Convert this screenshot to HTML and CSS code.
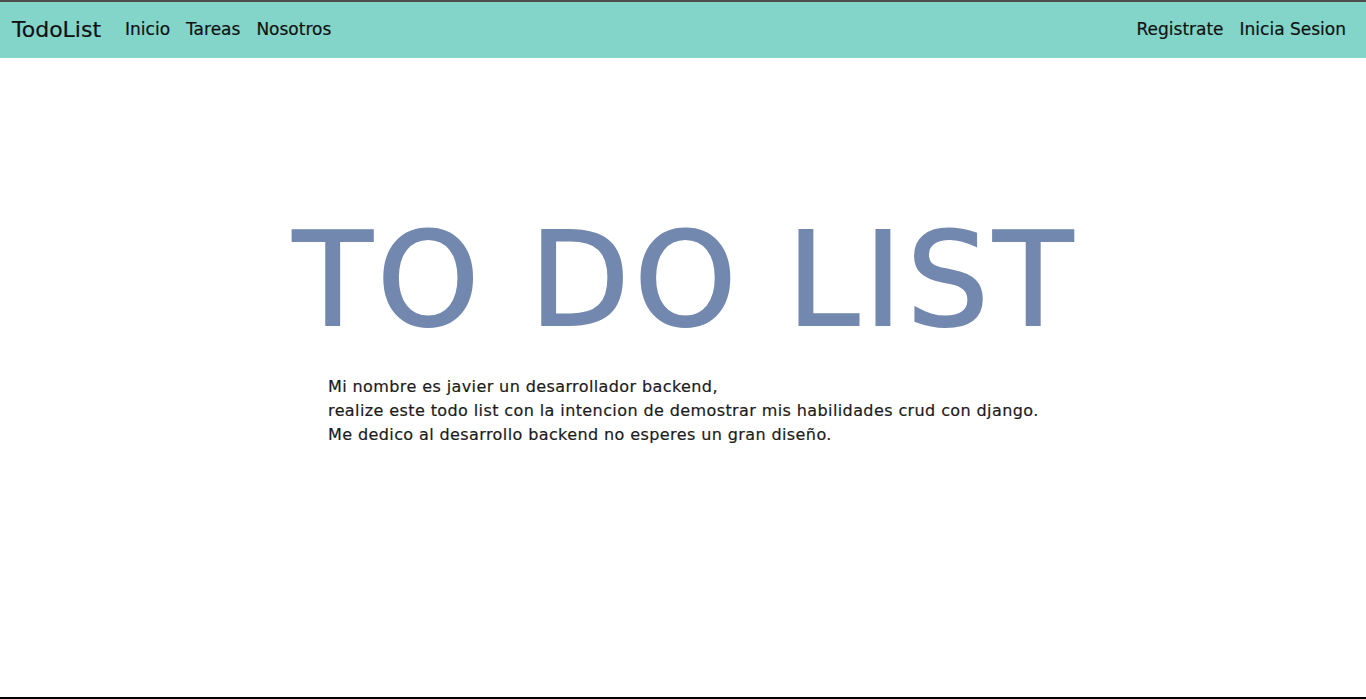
FILE: index.html
```html
<!DOCTYPE html>
<html lang="es">
<head>
<meta charset="utf-8">
<title>TodoList</title>
<link rel="stylesheet" href="styles.css">
</head>
<body>
<div class="page">
  <nav class="navbar">
    <div class="nav-left">
      <a class="brand" href="#">TodoList</a>
      <a class="nav-link" href="#">Inicio</a>
      <a class="nav-link" href="#">Tareas</a>
      <a class="nav-link" href="#">Nosotros</a>
    </div>
    <div class="nav-right">
      <a class="nav-link" href="#">Registrate</a>
      <a class="nav-link" href="#">Inicia Sesion</a>
    </div>
  </nav>
  <main class="hero">
    <h1 class="title">TO DO LIST</h1>
    <p class="intro">Mi nombre es javier un desarrollador backend,<br>realize este todo list con la intencion de demostrar mis habilidades crud con django.<br>Me dedico al desarrollo backend no esperes un gran diseño.</p>
  </main>
</div>
</body>
</html>
```
FILE: styles.css
```css
html, body {
  margin: 0;
  padding: 0;
}
body {
  font-family: "DejaVu Sans", sans-serif;
  color: #1b1b1b;
  background: #fff;
}
.page {
  box-sizing: border-box;
  min-height: 100vh;
  border-top: 2px solid #4d4d4d;
  border-bottom: 2px solid #000;
  display: flex;
  flex-direction: column;
}
.navbar {
  height: 56px;
  background: #83d4c9;
  display: flex;
  align-items: center;
  justify-content: space-between;
  padding: 0 20px 2px 12px;
  box-sizing: border-box;
}
.nav-left, .nav-right {
  display: flex;
  align-items: center;
  gap: 16px;
}
.brand {
  font-size: 22px;
  color: #111;
  text-decoration: none;
  margin-right: 8px;
  -webkit-text-stroke: 0.2px #111;
}
.nav-link {
  font-size: 17px;
  color: #111;
  text-decoration: none;
  -webkit-text-stroke: 0.2px #111;
}
.hero {
  display: flex;
  flex-direction: column;
  align-items: center;
}
.title {
  margin: 157px 0 0;
  padding-left: 4.5px;
  font-size: 130px;
  font-weight: normal;
  line-height: 1;
  color: #7388af;
  letter-spacing: 4.5px;
  -webkit-text-stroke: 2px #7388af;
}
.intro {
  align-self: flex-start;
  margin: 30px 0 0 328px;
  font-size: 16px;
  line-height: 24px;
  letter-spacing: 0.4px;
  -webkit-text-stroke: 0.2px #1b1b1b;
}
```
